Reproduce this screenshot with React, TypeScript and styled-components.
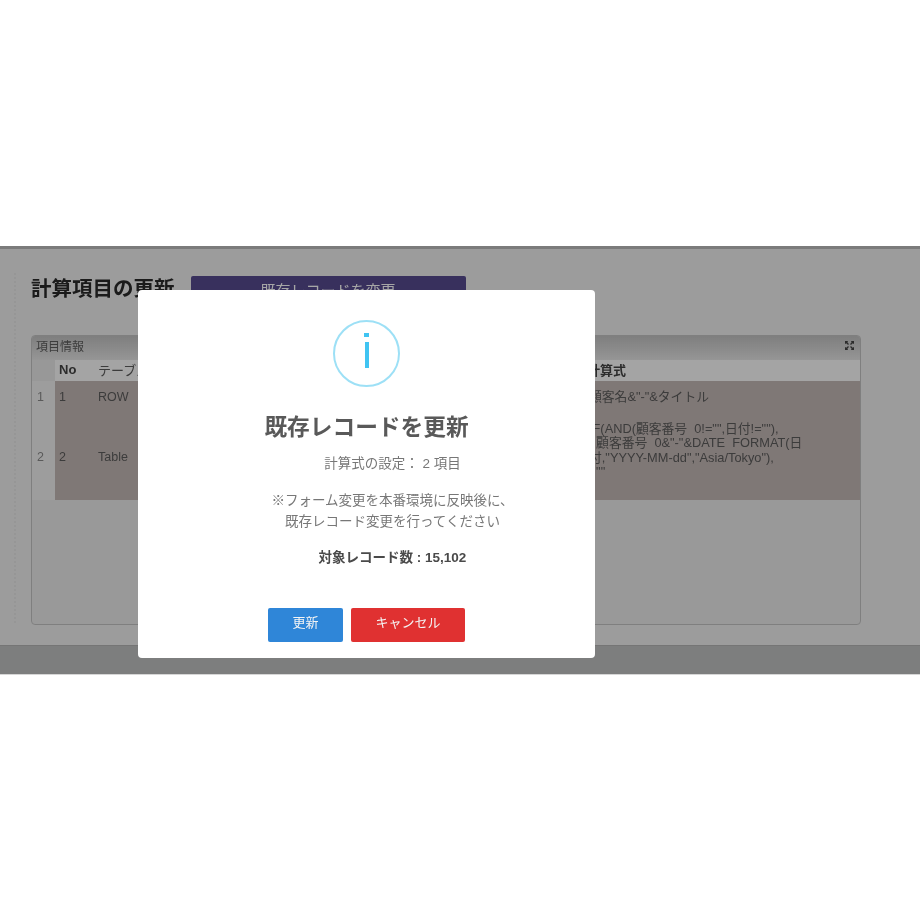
import React from 'react';
import styled, { createGlobalStyle } from 'styled-components';

const GlobalStyle = createGlobalStyle`
  html, body {
    margin: 0;
    background: #fff;
    font-family: "Liberation Sans", "Noto Sans CJK JP", sans-serif;
  }
`;

const Page = styled.div`
  width: 920px;
  height: 920px;
  padding-top: 246px;
  box-sizing: border-box;
  background: #fff;
  overflow: hidden;
`;

const Frame = styled.div`
  position: relative;
  height: 429px;
  box-sizing: border-box;
  display: flex;
  flex-direction: column;
  border-top: 3px solid #7b7b7b;
  border-bottom: 1px solid #d6d6d6;
  background: #f0f0f0;
`;

const Main = styled.main`
  flex: 1;
  padding: 27px 59px 0 31px;
  filter: blur(0.4px);
  background: repeating-linear-gradient(#e6e6e6 0 2px, #f0f0f0 2px 4px) 14px 24px / 2px 352px no-repeat;
`;

const Head = styled.div`
  display: flex;
  align-items: flex-start;
  gap: 16px;
`;

const H1 = styled.h1`
  margin: 0;
  font-size: 20.5px;
  line-height: 26px;
  font-weight: 700;
  color: #2a2a2a;
`;

const ChangeButton = styled.button`
  width: 275px;
  height: 34px;
  padding: 0 0 8px;
  border: none;
  border-radius: 2px;
  background: #574b90;
  color: #fff;
  font: inherit;
  font-size: 15px;
`;

const Panel = styled.section`
  height: 290px;
  margin-top: 25px;
  box-sizing: border-box;
  border: 1px solid #c4c4c4;
  border-radius: 4px;
  background: #ececec;
  overflow: hidden;
`;

const PanelTitle = styled.div`
  height: 24px;
  box-sizing: border-box;
  padding: 0 6px 6px 4px;
  display: flex;
  align-items: center;
  justify-content: space-between;
  background: linear-gradient(#c2c2c2, #e6e6e6);
  font-size: 12px;
  color: #5c5c5c;
`;

const Row = styled.div<{ $height: number; $head?: boolean }>`
  display: grid;
  grid-template-columns: 23px 39px 493px 1fr;
  height: ${p => p.$height}px;
  font-size: 12.5px;
  color: #5c5c5c;
  background: ${p => (p.$head ? '#fcfcfc' : '#c4b8b5')};
`;

const Cell = styled.div<{ $index?: boolean }>`
  display: flex;
  align-items: center;
  padding-left: ${p => (p.$index ? 5 : 4)}px;
  background: ${p => (p.$index ? '#f2f2f2' : 'transparent')};
  color: ${p => (p.$index ? '#8a8a8a' : 'inherit')};
`;

const HeadCell = styled.div<{ $bold?: boolean }>`
  display: flex;
  align-items: center;
  padding: 0 0 3px 4px;
  font-size: 13px;
  font-weight: ${p => (p.$bold ? 700 : 400)};
  color: ${p => (p.$bold ? '#444' : '#5c5c5c')};
`;

const CornerCell = styled.div`
  background: #eaeaea;
`;

const FormulaHead = styled(HeadCell)`
  padding-left: 0;
`;

const Formula = styled.div`
  padding: 9px 0 0 2px;
  white-space: pre;
  line-height: 14.4px;
  font-size: 12.8px;
`;

const Footer = styled.footer`
  height: 29px;
  box-sizing: border-box;
  background: #c0c2c2;
  border-top: 1px solid #b4b4b4;
`;

const Overlay = styled.div`
  position: absolute;
  inset: 0;
  background: rgba(0, 0, 0, 0.35);
`;

const Modal = styled.div`
  position: absolute;
  left: 138px;
  top: 41px;
  width: 457px;
  height: 368px;
  padding-top: 30px;
  box-sizing: border-box;
  background: #fff;
  border-radius: 4px;
  display: flex;
  flex-direction: column;
  align-items: center;
`;

const InfoIcon = styled.div`
  width: 67px;
  height: 67px;
  box-sizing: border-box;
  border: 2.5px solid #9de0f6;
  border-radius: 50%;
  display: flex;
  flex-direction: column;
  align-items: center;
  gap: 5px;
  padding-top: 11px;
  &::before {
    content: '';
    width: 5px;
    height: 4px;
    background: #40c4f2;
  }
  &::after {
    content: '';
    width: 4px;
    height: 26px;
    background: #40c4f2;
  }
`;

const Title = styled.h2`
  margin: 23px 0 0;
  font-size: 22.7px;
  line-height: 32px;
  font-weight: 700;
  color: #595959;
  font-family: "Noto Sans CJK JP", sans-serif;
  filter: blur(0.3px);
`;

const Body = styled.div`
  width: 100%;
  box-sizing: border-box;
  padding-left: 52px;
  text-align: center;
  color: #777;
  font-size: 13.5px;
  filter: blur(0.35px);
`;

const Summary = styled.p`
  margin: 12px 0 0;
  line-height: 20px;
`;

const Note = styled.p`
  margin: 16px 0 0;
  line-height: 21px;
`;

const Count = styled.p`
  margin: 16px 0 0;
  line-height: 20px;
  font-weight: 700;
  color: #4a4a4a;
`;

const Actions = styled.div`
  margin-top: 40px;
  display: flex;
  gap: 8px;
`;

const ModalButton = styled.button<{ $color: string; $width: number }>`
  width: ${p => p.$width}px;
  height: 34px;
  padding: 0 0 7px;
  border: none;
  border-radius: 2px;
  background: ${p => p.$color};
  color: #f4f4f4;
  font: inherit;
  font-size: 13px;
  filter: blur(0.3px);
`;

const formula = `顧客名&"-"&タイトル`;
const formula2 = `IF(AND(顧客番号  0!="",日付!=""),
  顧客番号  0&"-"&DATE  FORMAT(日
付,"YYYY-MM-dd","Asia/Tokyo"),
  ""`;

const App: React.FC = () => (
  <Page>
    <GlobalStyle />
    <Frame>
      <Main>
        <Head>
          <H1>計算項目の更新</H1>
          <ChangeButton>既存レコードを変更</ChangeButton>
        </Head>
        <Panel>
          <PanelTitle>
            項目情報
            <svg width="9" height="9" viewBox="0 0 9 9" fill="none" stroke="#444" strokeWidth="1.3">
              <path d="M0.5 0.5L3.5 3.5M0.5 2.8V0.5H2.8M8.5 0.5L5.5 3.5M6.2 0.5H8.5V2.8M8.5 8.5L5.5 5.5M8.5 6.2V8.5H6.2M0.5 8.5L3.5 5.5M2.8 8.5H0.5V6.2" />
            </svg>
          </PanelTitle>
          <Row $height={21} $head>
            <CornerCell />
            <HeadCell $bold>No</HeadCell>
            <HeadCell>テーブル</HeadCell>
            <FormulaHead $bold>計算式</FormulaHead>
          </Row>
          <Row $height={32}>
            <Cell $index>1</Cell>
            <Cell>1</Cell>
            <Cell>ROW</Cell>
            <Formula>{formula}</Formula>
          </Row>
          <Row $height={87}>
            <Cell $index>2</Cell>
            <Cell>2</Cell>
            <Cell>Table</Cell>
            <Formula>{formula2}</Formula>
          </Row>
        </Panel>
      </Main>
      <Footer />
      <Overlay />
      <Modal>
        <InfoIcon />
        <Title>既存レコードを更新</Title>
        <Body>
          <Summary>計算式の設定： 2 項目</Summary>
          <Note>
            ※フォーム変更を本番環境に反映後に、
            <br />
            既存レコード変更を行ってください
          </Note>
          <Count>対象レコード数 : 15,102</Count>
        </Body>
        <Actions>
          <ModalButton $color="#2f86d8" $width={75}>更新</ModalButton>
          <ModalButton $color="#e03131" $width={114}>キャンセル</ModalButton>
        </Actions>
      </Modal>
    </Frame>
  </Page>
);

export default App;
